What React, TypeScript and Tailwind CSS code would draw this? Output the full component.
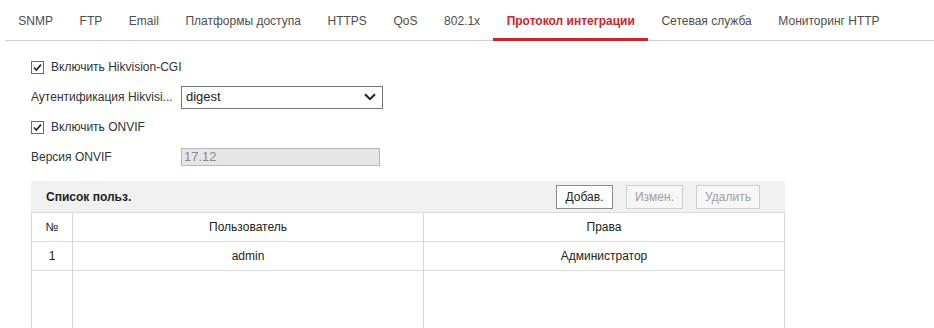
const tabs = [
  "SNMP",
  "FTP",
  "Email",
  "Платформы доступа",
  "HTTPS",
  "QoS",
  "802.1x",
  "Протокол интеграции",
  "Сетевая служба",
  "Мониторинг HTTP",
];

function CheckBox() {
  return (
    <svg width="13" height="13" viewBox="0 0 13 13" className="shrink-0">
      <rect x="0.5" y="0.5" width="12" height="12" fill="#fff" stroke="#6b6b6b" />
      <path d="M3 6.5 L5.3 9 L10 3.6" fill="none" stroke="#222" strokeWidth="1.6" />
    </svg>
  );
}

export default function App() {
  return (
    <div className="w-[934px] h-[328px] overflow-hidden bg-white text-[12px] text-[#333] font-['Liberation_Sans',Arial,sans-serif]">
      {/* tabs */}
      <div className="ml-[5px] flex border-b border-[#cfcfcf]">
        {tabs.map((t) => {
          const active = t === "Протокол интеграции";
          return (
            <div
              key={t}
              className={
                active
                  ? "h-[41px] -mb-px px-[13.3px] pt-[4px] flex items-center border-b-[3px] border-[#d2232a] text-[#d2232a] font-bold"
                  : "h-[41px] -mb-px px-[13.3px] pt-[4px] flex items-center border-b-[3px] border-transparent text-[#4d4d4d]"
              }
            >
              {t}
            </div>
          );
        })}
      </div>

      <div className="pl-[31px] pt-[11px]">
        <div className="h-[30px] flex items-center gap-[7px]">
          <CheckBox />
          <span>Включить Hikvision-CGI</span>
        </div>
        <div className="h-[30px] flex items-center">
          <span className="w-[150px]">Аутентификация Hikvisi...</span>
          <div className="w-[202px] h-[23px] border border-[#767676] flex items-center justify-between pl-[4px] pr-[6px] text-[13px] text-[#222]">
            <span>digest</span>
            <svg width="12" height="8" viewBox="0 0 12 8">
              <path d="M1 1.2 L6 6.2 L11 1.2" fill="none" stroke="#222" strokeWidth="2" />
            </svg>
          </div>
        </div>
        <div className="h-[30px] flex items-center gap-[7px]">
          <CheckBox />
          <span>Включить ONVIF</span>
        </div>
        <div className="h-[30px] flex items-center">
          <span className="w-[150px]">Версия ONVIF</span>
          <div className="w-[199px] h-[18px] border border-[#b8b8b8] bg-[#e6e6e6] flex items-center pl-[2px] text-[13px] text-[#8a8a8a]">
            17.12
          </div>
        </div>

        {/* user list */}
        <div className="mt-[9px] w-[754px]">
          <div className="h-[31px] bg-[#f1f1f1] flex items-center pl-[15px] pr-[25px]">
            <span className="font-bold text-[#222] flex-1">Список польз.</span>
            <div className="flex gap-[13px]">
              <button className="w-[57px] h-[24px] border border-[#8a8a8a] bg-white text-[#222]">
                Добав.
              </button>
              <button className="w-[57px] h-[24px] border border-[#d0d0d0] bg-[#f6f6f6] text-[#a0a0a0]">
                Измен.
              </button>
              <button className="w-[64px] h-[24px] border border-[#d0d0d0] bg-[#f6f6f6] text-[#a0a0a0]">
                Удалить
              </button>
            </div>
          </div>
          <table className="w-full table-fixed border-collapse text-[#222]">
            <colgroup>
              <col className="w-[41px]" />
              <col className="w-[351px]" />
              <col />
            </colgroup>
            <tbody>
              <tr className="h-[29px]">
                <td className="border border-[#dadada] text-center">№</td>
                <td className="border border-[#dadada] text-center">Пользователь</td>
                <td className="border border-[#dadada] text-center">Права</td>
              </tr>
              <tr className="h-[29px]">
                <td className="border border-[#dadada] text-center">1</td>
                <td className="border border-[#dadada] text-center">admin</td>
                <td className="border border-[#dadada] text-center">Администратор</td>
              </tr>
              <tr className="h-[80px]">
                <td className="border border-[#dadada]"></td>
                <td className="border border-[#dadada]"></td>
                <td className="border border-[#dadada]"></td>
              </tr>
            </tbody>
          </table>
        </div>
      </div>
    </div>
  );
}
